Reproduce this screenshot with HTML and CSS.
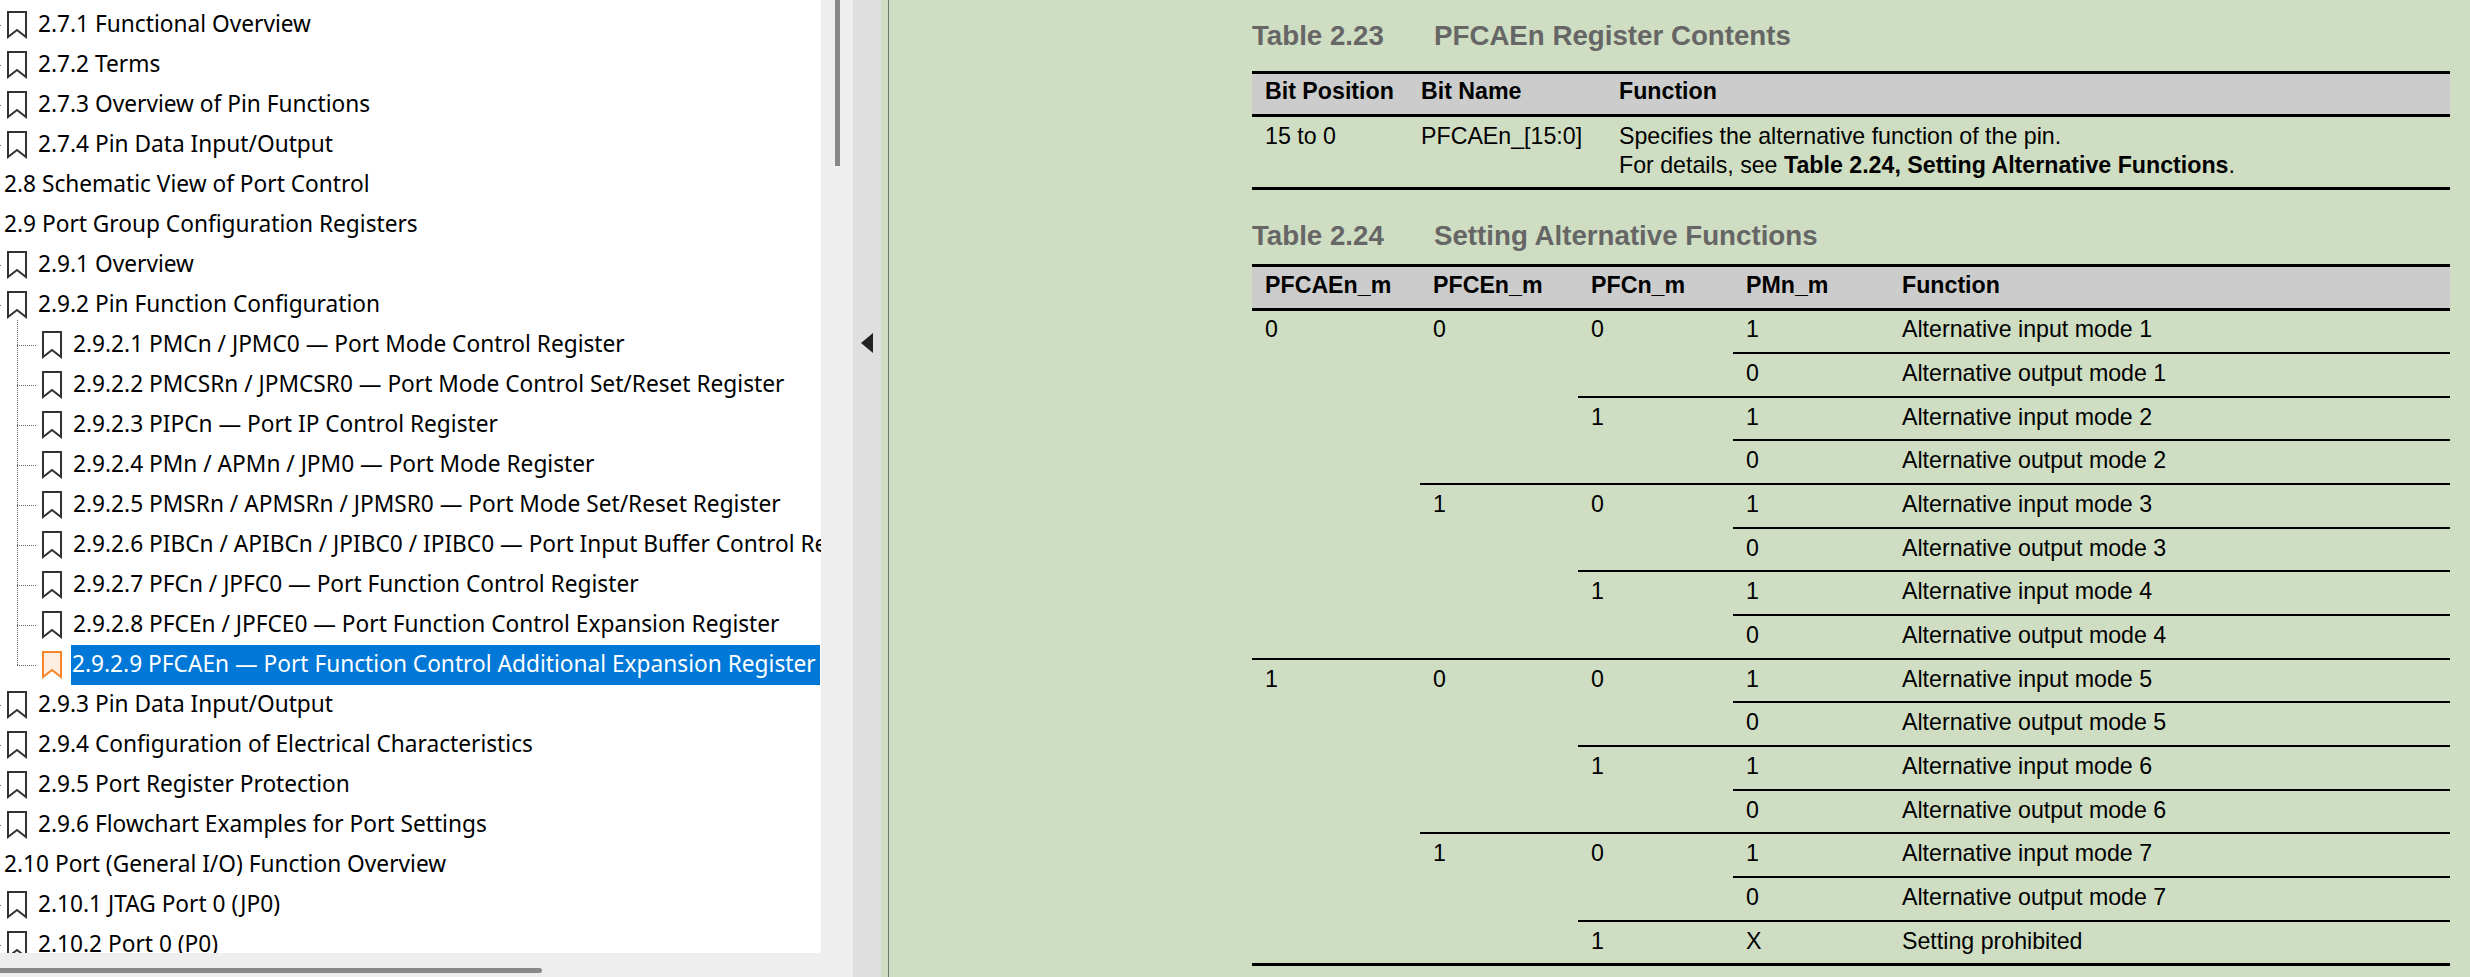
FILE: index.html
```html
<!DOCTYPE html>
<html lang="en">

<head>
  <meta charset="UTF-8">
  <title>PFCAEn Register</title>
  <link rel="stylesheet" href="styles.css">
</head>

<body>
  <svg class="defs" aria-hidden="true">
    <symbol id="mark" viewBox="0 0 20 28">
      <path d="M1 1H19V26L10 19L1 26Z" />
    </symbol>
  </svg>

  <div class="app">
    <!-- bookmark panel -->
    <aside class="side">
      <div class="side-top">
        <div class="tree">
          <ul class="list">
            <li class="row lv1"><svg class="mark"><use href="#mark" /></svg><span class="txt">2.7.1 Functional Overview</span></li>
            <li class="row lv1"><svg class="mark"><use href="#mark" /></svg><span class="txt">2.7.2 Terms</span></li>
            <li class="row lv1"><svg class="mark"><use href="#mark" /></svg><span class="txt">2.7.3 Overview of Pin Functions</span></li>
            <li class="row lv1"><svg class="mark"><use href="#mark" /></svg><span class="txt">2.7.4 Pin Data Input/Output</span></li>
            <li class="row"><span class="txt">2.8 Schematic View of Port Control</span></li>
            <li class="row"><span class="txt">2.9 Port Group Configuration Registers</span></li>
            <li class="row lv1"><svg class="mark"><use href="#mark" /></svg><span class="txt">2.9.1 Overview</span></li>
            <li class="row lv1"><svg class="mark"><use href="#mark" /></svg><span class="txt">2.9.2 Pin Function Configuration</span></li>
          </ul>
          <ul class="list sub">
            <li class="row lv2"><svg class="mark"><use href="#mark" /></svg><span class="txt">2.9.2.1 PMCn / JPMC0 — Port Mode Control Register</span></li>
            <li class="row lv2"><svg class="mark"><use href="#mark" /></svg><span class="txt">2.9.2.2 PMCSRn / JPMCSR0 — Port Mode Control Set/Reset Register</span></li>
            <li class="row lv2"><svg class="mark"><use href="#mark" /></svg><span class="txt">2.9.2.3 PIPCn — Port IP Control Register</span></li>
            <li class="row lv2"><svg class="mark"><use href="#mark" /></svg><span class="txt">2.9.2.4 PMn / APMn / JPM0 — Port Mode Register</span></li>
            <li class="row lv2"><svg class="mark"><use href="#mark" /></svg><span class="txt">2.9.2.5 PMSRn / APMSRn / JPMSR0 — Port Mode Set/Reset Register</span></li>
            <li class="row lv2"><svg class="mark"><use href="#mark" /></svg><span class="txt">2.9.2.6 PIBCn / APIBCn / JPIBC0 / IPIBC0 — Port Input Buffer Control Register</span></li>
            <li class="row lv2"><svg class="mark"><use href="#mark" /></svg><span class="txt">2.9.2.7 PFCn / JPFC0 — Port Function Control Register</span></li>
            <li class="row lv2"><svg class="mark"><use href="#mark" /></svg><span class="txt">2.9.2.8 PFCEn / JPFCE0 — Port Function Control Expansion Register</span></li>
            <li class="row lv2 active"><svg class="mark"><use href="#mark" /></svg><span class="txt">2.9.2.9 PFCAEn — Port Function Control Additional Expansion Register</span></li>
          </ul>
          <ul class="list">
            <li class="row lv1"><svg class="mark"><use href="#mark" /></svg><span class="txt">2.9.3 Pin Data Input/Output</span></li>
            <li class="row lv1"><svg class="mark"><use href="#mark" /></svg><span class="txt">2.9.4 Configuration of Electrical Characteristics</span></li>
            <li class="row lv1"><svg class="mark"><use href="#mark" /></svg><span class="txt">2.9.5 Port Register Protection</span></li>
            <li class="row lv1"><svg class="mark"><use href="#mark" /></svg><span class="txt">2.9.6 Flowchart Examples for Port Settings</span></li>
            <li class="row"><span class="txt">2.10 Port (General I/O) Function Overview</span></li>
            <li class="row lv1"><svg class="mark"><use href="#mark" /></svg><span class="txt">2.10.1 JTAG Port 0 (JP0)</span></li>
            <li class="row lv1"><svg class="mark"><use href="#mark" /></svg><span class="txt">2.10.2 Port 0 (P0)</span></li>
          </ul>
        </div>
        <div class="vbar">
          <div class="vthumb"></div>
        </div>
      </div>
      <div class="hbar">
        <div class="hthumb"></div>
      </div>
    </aside>

    <div class="split">
      <div class="arrow"></div>
    </div>

    <!-- document page -->
    <main class="page">
      <div class="doc">
        <h2 class="cap"><span class="cap-no">Table 2.23</span>PFCAEn Register Contents</h2>
        <table class="tbl tbl-a">
          <thead>
            <tr>
              <th>Bit Position</th>
              <th>Bit Name</th>
              <th>Function</th>
            </tr>
          </thead>
          <tbody>
            <tr>
              <td>15 to 0</td>
              <td>PFCAEn_[15:0]</td>
              <td>Specifies the alternative function of the pin.<br>For details, see <b>Table 2.24, Setting Alternative Functions</b>.</td>
            </tr>
          </tbody>
        </table>

        <h2 class="cap cap-b"><span class="cap-no">Table 2.24</span>Setting Alternative Functions</h2>
        <table class="tbl tbl-b">
          <thead>
            <tr>
              <th>PFCAEn_m</th>
              <th>PFCEn_m</th>
              <th>PFCn_m</th>
              <th>PMn_m</th>
              <th>Function</th>
            </tr>
          </thead>
          <tbody>
            <tr>
              <td rowspan="8">0</td>
              <td rowspan="4">0</td>
              <td rowspan="2">0</td>
              <td>1</td>
              <td>Alternative input mode 1</td>
            </tr>
            <tr>
              <td>0</td>
              <td>Alternative output mode 1</td>
            </tr>
            <tr>
              <td rowspan="2">1</td>
              <td>1</td>
              <td>Alternative input mode 2</td>
            </tr>
            <tr>
              <td>0</td>
              <td>Alternative output mode 2</td>
            </tr>
            <tr>
              <td rowspan="4">1</td>
              <td rowspan="2">0</td>
              <td>1</td>
              <td>Alternative input mode 3</td>
            </tr>
            <tr>
              <td>0</td>
              <td>Alternative output mode 3</td>
            </tr>
            <tr>
              <td rowspan="2">1</td>
              <td>1</td>
              <td>Alternative input mode 4</td>
            </tr>
            <tr>
              <td>0</td>
              <td>Alternative output mode 4</td>
            </tr>
            <tr>
              <td rowspan="7">1</td>
              <td rowspan="4">0</td>
              <td rowspan="2">0</td>
              <td>1</td>
              <td>Alternative input mode 5</td>
            </tr>
            <tr>
              <td>0</td>
              <td>Alternative output mode 5</td>
            </tr>
            <tr>
              <td rowspan="2">1</td>
              <td>1</td>
              <td>Alternative input mode 6</td>
            </tr>
            <tr>
              <td>0</td>
              <td>Alternative output mode 6</td>
            </tr>
            <tr>
              <td rowspan="3">1</td>
              <td rowspan="2">0</td>
              <td>1</td>
              <td>Alternative input mode 7</td>
            </tr>
            <tr>
              <td>0</td>
              <td>Alternative output mode 7</td>
            </tr>
            <tr>
              <td>1</td>
              <td>X</td>
              <td>Setting prohibited</td>
            </tr>
          </tbody>
        </table>
      </div>
    </main>
  </div>
</body>

</html>
```

FILE: styles.css
```css
* {
  margin: 0;
  padding: 0;
  box-sizing: border-box;
  list-style: none;
}

html,
body {
  height: 100%;
  overflow: hidden;
}

.defs {
  display: none;
}

.app {
  display: flex;
  height: 977px;
}

/* bookmark panel */
.side {
  width: 853px;
  display: flex;
  flex-direction: column;
  background: #eee;
}

.side-top {
  display: flex;
  height: 953px;
}

.tree {
  width: 821px;
  height: 953px;
  padding-top: 5px;
  overflow: hidden;
  background: #fff;
  border-bottom-right-radius: 3px;
  font-family: "Noto Sans", sans-serif;
  font-size: 22.7px;
  color: #000;
}

.row {
  position: relative;
  display: flex;
  align-items: center;
  height: 40px;
  padding-left: 3px;
  white-space: nowrap;
}

.txt {
  display: block;
  height: 40px;
  line-height: 37px;
  padding: 0 1px;
}

.mark {
  flex: none;
  width: 20px;
  height: 28px;
  margin-right: 10px;
  fill: none;
  stroke: #333;
  stroke-width: 2;
}

.lv1 {
  padding-left: 7px;
}

.lv1 .txt {
  padding-left: 1px;
}

.lv2 {
  padding-left: 42px;
}

/* dotted tree lines */
.lv1::before,
.lv2::before {
  content: "";
  position: absolute;
  top: 20px;
  left: 0;
  width: 1px;
  border-top: 1px dotted #666;
}

.lv2::before {
  left: 17px;
  width: 19px;
}

.sub {
  position: relative;
}

.sub::before {
  content: "";
  position: absolute;
  top: -5px;
  bottom: 20px;
  left: 17px;
  border-left: 1px dotted #666;
}

.active .txt {
  flex: 1;
  background: #0078d7;
  color: #fff;
  margin-right: 1px;
  padding-left: 1px;
}

.active .mark {
  margin-right: 9px;
  fill: #fdeee2;
  stroke: #f5842a;
}

.vbar {
  width: 32px;
  padding-left: 14px;
}

.vthumb {
  width: 5px;
  height: 166px;
  background: #888;
}

.hbar {
  height: 24px;
  padding-top: 15px;
}

.hthumb {
  width: 542px;
  height: 5px;
  background: #888;
  border-radius: 0 3px 3px 0;
}

.split {
  width: 28px;
  display: flex;
  align-items: center;
  padding-left: 8px;
  background: #dfdfdf;
}

.arrow {
  width: 0;
  height: 0;
  margin-top: -291px;
  border-top: 10px solid transparent;
  border-bottom: 10px solid transparent;
  border-right: 12px solid #222;
}

/* document page */
.page {
  flex: 1;
  padding-left: 7px;
  background: #cfdec2;
}

.doc {
  height: 100%;
  padding: 20px 0 0 363px;
  border-left: 1px solid #6b7a6b;
  font-family: "Liberation Sans", Arial, sans-serif;
  font-size: 23.2px;
  line-height: 29px;
  color: #000;
}

.cap {
  height: 30px;
  margin-bottom: 21px;
  font-size: 27.7px;
  line-height: 32px;
  font-weight: bold;
  color: #666;
}

.cap-no {
  display: inline-block;
  width: 182px;
}

.cap-b {
  margin: 30px 0 14px;
}

.tbl {
  width: 1198px;
  table-layout: fixed;
  border-collapse: separate;
  border-spacing: 0;
  border-bottom: 3px solid #000;
}

.tbl th {
  height: 46px;
  padding: 3px 0 0 13px;
  text-align: left;
  vertical-align: top;
  white-space: nowrap;
  background: #ccc;
  border-top: 3px solid #000;
  border-bottom: 3px solid #000;
}

.tbl td {
  padding: 5px 0 0 13px;
  vertical-align: top;
  white-space: nowrap;
}

.tbl-a th:nth-child(1) {
  width: 145px;
}

.tbl-a th:nth-child(2) {
  width: 209px;
  padding-left: 24px;
}

.tbl-a td:nth-child(2) {
  padding-left: 24px;
}

.tbl-a tbody td {
  height: 70px;
}

.tbl-b th {
  height: 47px;
  padding-top: 4px;
}

.tbl-b th:nth-child(1) {
  width: 168px;
}

.tbl-b th:nth-child(2) {
  width: 158px;
}

.tbl-b th:nth-child(3) {
  width: 155px;
}

.tbl-b th:nth-child(4) {
  width: 156px;
}

.tbl-b tbody tr {
  height: 43.66px;
}

.tbl-b tbody tr:first-child {
  height: 41px;
}

.tbl-b tbody tr:first-child td {
  padding-top: 4px;
}

.tbl-b tbody tr+tr td {
  border-top: 2px solid #000;
  padding-top: 5px;
}
```
